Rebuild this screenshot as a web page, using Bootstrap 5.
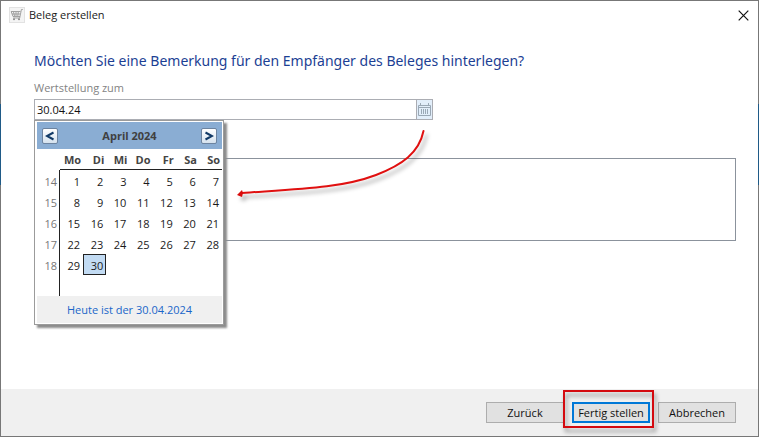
<!DOCTYPE html>
<html lang="de">
<head>
<meta charset="utf-8">
<meta name="viewport" content="width=device-width, initial-scale=1">
<title>Beleg erstellen</title>
<link rel="stylesheet" href="https://cdn.jsdelivr.net/npm/bootstrap@5.3.0/dist/css/bootstrap.min.css">
<style>
body {
  font-family: "Open Sans", "Noto Sans", sans-serif;
  font-size: 11px;
  line-height: 16px;
  color: #1a1a1a;
  padding: 1px;
  background: #777 linear-gradient(#1f5a87, #1f5a87) 0 104px / 100% 81px no-repeat;
}
.dialog-title { height: 28px; padding: 0 8px; }
.dialog-close { width: 13px; height: 13px; line-height: 0; color: #111; }
.dialog-main { padding: 22px 22px 0 33px; }
.question { font-family: "Noto Sans", sans-serif; font-size: 14px; line-height: 20px; color: #1c3f94; }
.field-label { color: #838383; line-height: 16px; margin: 9px 0 3px; }
.date-field { width: 399px; max-width: 100%; height: 21px; border: 1px solid #abadb3; background: #fff; }
.date-input { font-size: 11px; padding: 0 2px; outline: 0; color: #111; min-width: 0; }
.date-toggle { width: 16px; background: #e2eefa; border-left: 1px solid #abadb3; line-height: 0; }
.remark { height: 83px; margin-top: 38px; border: 1px solid #8b929c; resize: none; outline: 0; }
.calendar {
  left: 0; top: 100%; width: 190px; z-index: 3;
  background: #fff; border: 1px solid #9b9b9b; padding: 1px 1px 1px 2px;
  box-shadow: 3px 3px 2px #8c8c8c;
}
.cal-head { height: 27px; padding: 0 5px; background: #8aadd3; color: #404040; }
.cal-nav {
  width: 16px; height: 16px; line-height: 0; color: #123a66;
  border: 1px solid #6d84a0; border-radius: 2px;
  background: linear-gradient(#fff, #d5e2ee);
}
.cal-grid { table-layout: fixed; border-collapse: separate; border-spacing: 0; line-height: 16px; color: #1a1a1a; }
.cal-grid th, .cal-grid td { text-align: right; height: 21px; padding: 2px 3px 0 0; }
.cal-grid thead td { width: 23px; }
.cal-grid thead th { color: #444; border-bottom: 1px solid #222; padding-right: 2px; }
.cal-grid tbody th { font-weight: 400; color: #777; border-right: 1px solid #222; padding-right: 2px; }
.cal-grid .picked { background: #c2dbf3; border: 1px solid #222; padding: 2px 2px 0 0; }
.cal-grid .spare th { height: 20px; }
.cal-foot { height: 27px; background: #f0f0f0; }
.cal-foot a { color: #1a66c9; }
.arrow { left: 194px; top: 22px; z-index: 4; overflow: visible; pointer-events: none; filter: drop-shadow(3px 4px 2px rgba(0,0,0,.35)); }
.dialog-foot { height: 47px; padding: 0 22px; gap: 8px; background: #f0f0f0; }
.cmd { width: 78px; height: 21px; border: 1px solid #adadad; background: #e1e1e1; color: #111; }
.cmd-main { border: 2px solid #0078d7; }
.marker { left: -9px; right: -4px; top: -12px; bottom: -5px; border: 2px solid #d40a0f; pointer-events: none; filter: drop-shadow(2px 4px 2px rgba(0,0,0,.4)); }
</style>
</head>
<body class="d-flex flex-column min-vh-100">
<header class="dialog-title d-flex align-items-center justify-content-between bg-white">
  <div class="d-flex align-items-center gap-1">
    <svg width="16" height="16" viewBox="0 0 16 16" fill="none" aria-hidden="true">
      <rect x=".5" y=".5" width="15" height="15" fill="#f4f4f4" stroke="#e2e2e2"/>
      <path d="M2 4.5h9.5M13.8 2.5h-1.4L10.7 11H4.2M2.2 4.7 4 9.5h7M4.5 5l1 4M7 5v4M9.3 5l-.5 4M3 7h8" stroke="#999" stroke-width=".9"/>
      <circle cx="5" cy="12.3" r="1" fill="#888"/><circle cx="10" cy="12.3" r="1" fill="#888"/>
    </svg>
    <span>Beleg erstellen</span>
  </div>
  <button type="button" class="dialog-close border-0 bg-transparent p-0" aria-label="Schließen">
    <svg width="11" height="11" viewBox="0 0 11 11" stroke="currentColor" stroke-width="1.2"><path d="M.7.7l9.6 9.6M10.3.7.7 10.3"/></svg>
  </button>
</header>

<main class="dialog-main flex-grow-1 bg-white">
  <h1 class="question fw-normal mb-0">Möchten Sie eine Bemerkung für den Empfänger des Beleges hinterlegen?</h1>
  <label class="field-label d-block" for="valueDate">Wertstellung zum</label>
  <div class="position-relative">
    <div class="date-field d-flex">
      <input class="date-input flex-grow-1 border-0" id="valueDate" type="text" value="30.04.24">
      <button type="button" class="date-toggle border-top-0 border-end-0 border-bottom-0 p-0" aria-label="Kalender öffnen">
        <svg width="13" height="13" viewBox="0 0 13 13" fill="none" stroke="#9aa8b5"><path d="M.5 2.5h12v10H.5zM.5 4.5h12M2.5 0v3M10.5 0v3M3.5 6v5M5.5 6v5M7.5 6v5M9.5 6v5"/></svg>
      </button>
    </div>

    <div class="calendar position-absolute">
      <div class="cal-head d-flex align-items-center justify-content-between">
        <button type="button" class="cal-nav p-0" aria-label="Voriger Monat"><svg width="10" height="10" viewBox="0 0 10 10" fill="none" stroke="currentColor" stroke-width="2"><path d="M8.500 1.500 2 5l6.500 3.500"/></svg></button>
        <strong>April 2024</strong>
        <button type="button" class="cal-nav p-0" aria-label="Nächster Monat"><svg width="10" height="10" viewBox="0 0 10 10" fill="none" stroke="currentColor" stroke-width="2"><path d="M1.500 1.500 8 5 1.500 8.500"/></svg></button>
      </div>
      <table class="cal-grid w-100">
        <thead><tr><td></td><th scope="col">Mo</th><th scope="col">Di</th><th scope="col">Mi</th><th scope="col">Do</th><th scope="col">Fr</th><th scope="col">Sa</th><th scope="col">So</th></tr></thead>
        <tbody>
          <tr><th scope="row">14</th><td>1</td><td>2</td><td>3</td><td>4</td><td>5</td><td>6</td><td>7</td></tr>
          <tr><th scope="row">15</th><td>8</td><td>9</td><td>10</td><td>11</td><td>12</td><td>13</td><td>14</td></tr>
          <tr><th scope="row">16</th><td>15</td><td>16</td><td>17</td><td>18</td><td>19</td><td>20</td><td>21</td></tr>
          <tr><th scope="row">17</th><td>22</td><td>23</td><td>24</td><td>25</td><td>26</td><td>27</td><td>28</td></tr>
          <tr><th scope="row">18</th><td>29</td><td class="picked">30</td><td></td><td></td><td></td><td></td><td></td></tr>
          <tr class="spare"><th></th><td colspan="7"></td></tr>
        </tbody>
      </table>
      <div class="cal-foot d-flex align-items-center justify-content-center"><a class="text-decoration-none" href="#">Heute ist der 30.04.2024</a></div>
    </div>

    <svg class="arrow position-absolute" width="210" height="80" viewBox="228 121 210 80" fill="none" aria-hidden="true">
      <path d="M423.500 131C419 153 402 165 376 175 342 188 300 189 242 193" stroke="#e01010" stroke-width="2" stroke-linecap="round"/>
      <path d="M237 195l5-5 1 3 -1 4z" fill="#d80c0c"/>
    </svg>
  </div>
  <textarea class="remark d-block w-100 rounded-0" aria-label="Bemerkung"></textarea>
</main>

<footer class="dialog-foot d-flex align-items-center justify-content-end">
  <button type="button" class="cmd p-0">Zurück</button>
  <div class="position-relative d-flex">
    <button type="button" class="cmd cmd-main p-0">Fertig stellen</button>
    <span class="marker position-absolute"></span>
  </div>
  <button type="button" class="cmd p-0">Abbrechen</button>
</footer>
<script src="https://cdn.jsdelivr.net/npm/bootstrap@5.3.0/dist/js/bootstrap.bundle.min.js"></script>
</body>
</html>
